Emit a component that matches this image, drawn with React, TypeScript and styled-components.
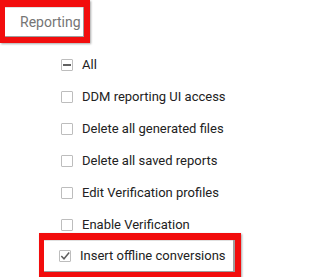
import React from 'react';
import styled, { createGlobalStyle } from 'styled-components';

const GlobalStyle = createGlobalStyle`
  html, body {
    margin: 0;
    padding: 0;
    background: #ffffff;
  }
  body {
    font-family: Roboto, "Liberation Sans", Arial, sans-serif;
    -webkit-font-smoothing: antialiased;
  }
`;

const Page = styled.div`
  width: 294px;
  height: 277px;
  overflow: hidden;
  display: flex;
  flex-direction: column;
  align-items: flex-start;
`;

const Highlight = styled.div<{ $offset?: number }>`
  border: solid #f20d0d;
  border-width: 7px 6px 6px 5px;
  box-shadow: 1px 1px 2px rgba(0, 0, 0, 0.35);
  margin-top: ${({ $offset }) => $offset ?? 0}px;
  margin-left: ${({ $offset }) => ($offset ? 39 : 0)}px;
`;

const Tab = styled.div`
  width: 79px;
  height: 30px;
  box-sizing: border-box;
  padding-left: 15px;
  display: flex;
  align-items: center;
  background: #fff;
  box-shadow: inset -1px -1px 0 #9e9e9e, inset 0 1px 0 #e0e0e0;
  font-size: 14px;
  color: #757575;
`;

const List = styled.ul`
  list-style: none;
  margin: 6px 0 0;
  padding: 0 0 0 61px;
  display: flex;
  flex-direction: column;
`;

const Row = styled.li`
  display: flex;
  align-items: center;
  gap: 9px;
  padding: 8px 0;
  font-size: 13px;
  line-height: 16px;
  color: #222222;
  white-space: nowrap;
`;

const Box = styled.span`
  width: 12px;
  height: 12px;
  box-sizing: border-box;
  border: 1px solid #bdbdbd;
  border-radius: 1px;
  display: flex;
  align-items: center;
  justify-content: center;
  flex: none;
`;

const Inner = styled.div`
  width: 191px;
  box-sizing: border-box;
  padding: 0 0 0 15px;
  background: #fff;
  box-shadow: inset -2px -1px 0 #9e9e9e, inset 0 1px 0 #e0e0e0;
`;

const HighlightList = styled.ul`
  list-style: none;
  margin: 0;
  padding: 0;
`;

type State = 'none' | 'mixed' | 'checked';

const Checkbox = ({ state }: { state: State }) => (
  <Box>
    {state === 'mixed' && (
      <svg width="8" height="8" viewBox="0 0 8 8">
        <rect x="0" y="3" width="8" height="2" fill="#616161" />
      </svg>
    )}
    {state === 'checked' && (
      <svg width="10" height="10" viewBox="0 0 10 10">
        <path d="M1.3 5 L4 7.8 L9.2 1.6" fill="none" stroke="#5f5f5f" strokeWidth="1.5" />
      </svg>
    )}
  </Box>
);

const items = [
  'DDM reporting UI access',
  'Delete all generated files',
  'Delete all saved reports',
  'Edit Verification profiles',
  'Enable Verification',
];

const App = () => (
  <>
    <GlobalStyle />
    <Page>
      <Highlight>
        <Tab>Reporting</Tab>
      </Highlight>
      <List>
        <Row>
          <Checkbox state="mixed" />
          All
        </Row>
        {items.map((label) => (
          <Row key={label}>
            <Checkbox state="none" />
            {label}
          </Row>
        ))}
      </List>
      <Highlight $offset={-8}>
        <Inner>
          <HighlightList>
            <Row>
              <Checkbox state="checked" />
              Insert offline conversions
            </Row>
          </HighlightList>
        </Inner>
      </Highlight>
    </Page>
  </>
);

export default App;
